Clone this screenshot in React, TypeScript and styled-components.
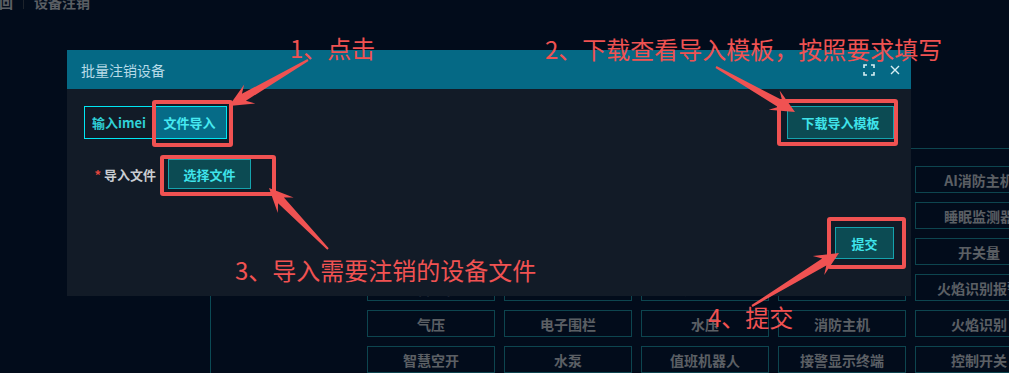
import styled, { createGlobalStyle } from "styled-components";

const GlobalStyle = createGlobalStyle`
  html, body {
    margin: 0;
    padding: 0;
    background: #020c1b;
  }
  * {
    box-sizing: border-box;
  }
  body {
    font-family: "Noto Sans CJK SC", "Noto Sans", "Liberation Sans", sans-serif;
  }
`;

const deviceTypes = [
  "烟感探测器", "可燃气体", "温湿度", "门磁", "AI消防主机",
  "手动报警", "声光报警", "水浸", "电气火灾", "睡眠监测器",
  "摄像头", "智能网关", "液位", "消火栓", "开关量",
  "报警主机", "电流互感器", "灭火器", "液体温度", "火焰识别报警",
  "气压", "电子围栏", "水压", "消防主机", "火焰识别",
  "智慧空开", "水泵", "值班机器人", "接警显示终端", "控制开关",
];

const Page = styled.div`
  position: relative;
  width: 1009px;
  height: 373px;
  overflow: hidden;
  background: #041836;
`;

const Breadcrumb = styled.div`
  display: flex;
  align-items: center;
  height: 20px;
  margin: -8px 0 0 -15px;
  font-size: 14px;
  font-weight: 700;
  color: #b6bec8;
`;

const Crumb = styled.span``;

const CrumbSep = styled.span`
  width: 1px;
  height: 14px;
  margin: 0 10px;
  background: #3a4656;
`;

const Main = styled.div`
  display: flex;
  height: 361px;
`;

const Side = styled.aside`
  flex: 0 0 211px;
  margin-top: 143px;
  border-right: 1px solid #1694aa;
`;

const Content = styled.section`
  flex: 1;
  min-width: 0;
  display: flex;
  flex-direction: column;
`;

const ContentHead = styled.div`
  height: 144px;
  margin-left: 156px;
  border-bottom: 1px solid #1a8a9e;
`;

const Grid = styled.div`
  display: grid;
  grid-template-columns: repeat(5, 128px);
  grid-auto-rows: 27px;
  column-gap: 9px;
  row-gap: 9px;
  padding: 17px 0 0 156px;
`;

const TypeCell = styled.div`
  display: flex;
  align-items: center;
  justify-content: center;
  border: 1px solid #1a8a9e;
  font-size: 14px;
  font-weight: 700;
  color: #b6bec8;
  white-space: nowrap;
`;

const Mask = styled.div`
  position: absolute;
  inset: 0;
  background: rgba(0, 0, 0, 0.5);
`;

const Modal = styled.div`
  position: absolute;
  left: 67px;
  top: 50px;
  width: 844px;
  display: flex;
  flex-direction: column;
  background: #121b27;
`;

const ModalHeader = styled.div`
  display: flex;
  align-items: center;
  height: 39px;
  padding: 0 11px 0 14px;
  background: #056985;
`;

const ModalTitle = styled.div`
  flex: 1;
  font-size: 14px;
  color: #b7dbe8;
`;

const HeaderTools = styled.div`
  display: flex;
  align-items: center;
  gap: 15px;
  color: #d6eef3;
`;

const ModalBody = styled.div`
  display: flex;
  flex-direction: column;
  padding: 17px 17px 37px;
`;

const TopRow = styled.div`
  display: flex;
  justify-content: space-between;
  align-items: center;
`;

const Tabs = styled.div`
  display: flex;
  height: 33px;
  border: 1px solid #00e6f2;
`;

const Tab = styled.div<{ $active?: boolean }>`
  display: flex;
  align-items: center;
  justify-content: center;
  width: ${({ $active }) => ($active ? "73px" : "68px")};
  font-size: 13px;
  font-weight: 700;
  color: ${({ $active }) => ($active ? "#46e9f1" : "#2fcfd6")};
  background: ${({ $active }) => ($active ? "#066b87" : "transparent")};
`;

const Button = styled.button<{ $w: number; $h: number }>`
  width: ${({ $w }) => $w}px;
  height: ${({ $h }) => $h}px;
  padding: 0;
  border: 1px solid #15a3ad;
  background: #0c4b53;
  color: #3fe3ea;
  font-family: inherit;
  font-size: 13px;
  font-weight: 700;
  cursor: pointer;
`;

const FormRow = styled.div`
  display: flex;
  align-items: center;
  margin-top: 20px;
`;

const FormLabel = styled.label`
  width: 72px;
  margin-right: 12px;
  text-align: right;
  font-size: 13px;
  font-weight: 700;
  color: #c9cdd2;
`;

const Required = styled.span`
  color: #e2453c;
  margin-right: 3px;
`;

const Footer = styled.div`
  display: flex;
  justify-content: flex-end;
  margin-top: 38px;
`;

const Marks = styled.div`
  position: absolute;
  inset: 0;
  pointer-events: none;
`;

const MarkBox = styled.div<{ $x: number; $y: number; $w: number; $h: number }>`
  position: absolute;
  left: ${({ $x }) => $x}px;
  top: ${({ $y }) => $y}px;
  width: ${({ $w }) => $w}px;
  height: ${({ $h }) => $h}px;
  border: 4px solid #f05252;
  border-radius: 3px;
`;

const MarkText = styled.div<{ $x: number; $y: number }>`
  position: absolute;
  left: ${({ $x }) => $x}px;
  top: ${({ $y }) => $y}px;
  font-size: 24px;
  line-height: 1;
  color: #f05252;
  white-space: nowrap;
`;

const ArrowLayer = styled.svg`
  position: absolute;
  inset: 0;
`;

type Pt = [number, number];

const arrowPoints = (t: Pt, p: Pt, head = 24, half = 11, neck = 4, tail = 1) => {
  const dx = p[0] - t[0];
  const dy = p[1] - t[1];
  const len = Math.hypot(dx, dy);
  const ux = dx / len;
  const uy = dy / len;
  const nx = -uy;
  const ny = ux;
  const at = (d: number, w: number): string =>
    `${(p[0] - ux * d + nx * w).toFixed(1)},${(p[1] - uy * d + ny * w).toFixed(1)}`;
  return [
    at(len, tail),
    at(head * 0.72, neck),
    at(head, half),
    at(0, 0),
    at(head, -half),
    at(head * 0.72, -neck),
    at(len, -tail),
  ].join(" ");
};

const arrows: [Pt, Pt][] = [
  [[308, 60], [229, 106]],
  [[716, 67], [795, 112]],
  [[328, 249], [269, 188]],
  [[752, 306], [839, 253]],
];

const FullscreenIcon = () => (
  <svg width="12" height="12" viewBox="0 0 12 12" fill="none" stroke="currentColor" strokeWidth="1.6">
    <path d="M1 4V1h3M8 1h3v3M11 8v3H8M4 11H1V8" />
  </svg>
);

const CloseIcon = () => (
  <svg width="10" height="10" viewBox="0 0 10 10" fill="none" stroke="currentColor" strokeWidth="1.4">
    <path d="M1 1l8 8M9 1L1 9" />
  </svg>
);

export default function App() {
  return (
    <Page>
      <GlobalStyle />
      <Breadcrumb>
        <Crumb>返回</Crumb>
        <CrumbSep />
        <Crumb>设备注销</Crumb>
      </Breadcrumb>
      <Main>
        <Side />
        <Content>
          <ContentHead />
          <Grid>
            {deviceTypes.map((name) => (
              <TypeCell key={name}>{name}</TypeCell>
            ))}
          </Grid>
        </Content>
      </Main>

      <Mask />

      <Modal>
        <ModalHeader>
          <ModalTitle>批量注销设备</ModalTitle>
          <HeaderTools>
            <FullscreenIcon />
            <CloseIcon />
          </HeaderTools>
        </ModalHeader>
        <ModalBody>
          <TopRow>
            <Tabs>
              <Tab>输入imei</Tab>
              <Tab $active>文件导入</Tab>
            </Tabs>
            <Button $w={107} $h={33}>下载导入模板</Button>
          </TopRow>
          <FormRow>
            <FormLabel>
              <Required>*</Required>导入文件
            </FormLabel>
            <Button $w={83} $h={30}>选择文件</Button>
          </FormRow>
          <Footer>
            <Button $w={59} $h={32}>提交</Button>
          </Footer>
        </ModalBody>
      </Modal>

      <Marks>
        <MarkBox $x={152} $y={100} $w={81} $h={47} />
        <MarkBox $x={777} $y={99} $w={121} $h={47} />
        <MarkBox $x={160} $y={155} $w={116} $h={41} />
        <MarkBox $x={827} $y={217} $w={79} $h={52} />
        <MarkText $x={290} $y={36}>1、点击</MarkText>
        <MarkText $x={545} $y={37}>2、下载查看导入模板，按照要求填写</MarkText>
        <MarkText $x={235} $y={258}>3、导入需要注销的设备文件</MarkText>
        <MarkText $x={708} $y={305}>4、提交</MarkText>
        <ArrowLayer width="1009" height="373" viewBox="0 0 1009 373">
          {arrows.map(([t, p], i) => (
            <polygon key={i} points={arrowPoints(t, p)} fill="#f05252" />
          ))}
        </ArrowLayer>
      </Marks>
    </Page>
  );
}
